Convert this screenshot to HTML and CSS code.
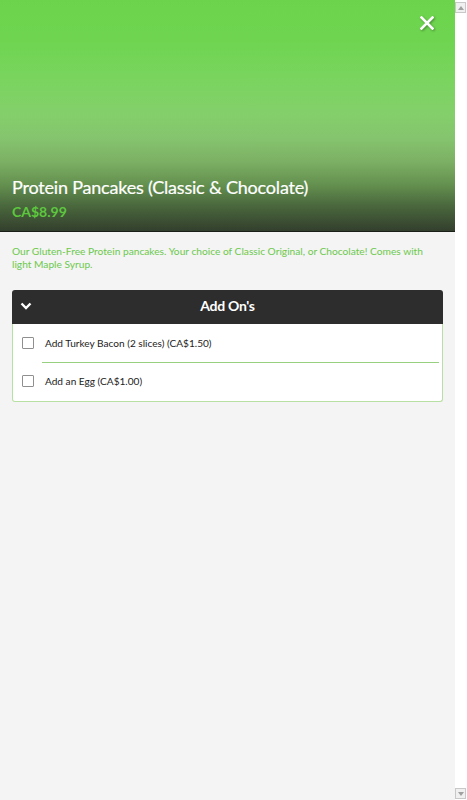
FILE: index.html
```html
<!DOCTYPE html>
<html>
<head>
<meta charset="utf-8">
<link rel="stylesheet" href="styles.css">
</head>
<body>
<div class="frame">
  <main class="page">
    <header class="hero">
      <button class="close" aria-label="Close">
        <svg width="14" height="14" viewBox="0 0 14 14"><path d="M1.5 1.5 L12.5 12.5 M12.5 1.5 L1.5 12.5" stroke="#fff" stroke-width="2.6" stroke-linecap="square"/></svg>
      </button>
      <div class="hero-text">
        <h1 class="title">Protein Pancakes (Classic &amp; Chocolate)</h1>
        <div class="price">CA$8.99</div>
      </div>
    </header>
    <p class="desc">Our Gluten-Free Protein pancakes. Your choice of Classic Original, or Chocolate! Comes with light Maple Syrup.</p>
    <section class="panel">
      <div class="panel-head">
        <svg class="chev" width="12" height="8" viewBox="0 0 12 8"><path d="M1.5 1.5 L6 6 L10.5 1.5" stroke="#fff" stroke-width="2.4" fill="none"/></svg>
        <span class="panel-title">Add On's</span>
      </div>
      <div class="panel-body">
        <label class="row row-first"><span class="box"></span><span class="label">Add Turkey Bacon (2 slices) (CA$1.50)</span></label>
        <div class="sep"></div>
        <label class="row row-last"><span class="box"></span><span class="label">Add an Egg (CA$1.00)</span></label>
      </div>
    </section>
  </main>
  <aside class="scrollbar">
    <div class="sb-btn"><svg width="6" height="4" viewBox="0 0 6 4"><path d="M0 4 L3 0 L6 4Z" fill="#a0a0a0"/></svg></div>
    <div class="sb-track"></div>
    <div class="sb-btn"><svg width="6" height="4" viewBox="0 0 6 4"><path d="M0 0 L3 4 L6 0Z" fill="#a0a0a0"/></svg></div>
  </aside>
</div>
</body>
</html>
```
FILE: styles.css
```css
html, body {
  margin: 0;
  padding: 0;
}
body {
  font-family: Lato, "Open Sans", sans-serif;
  background: #fff;
  overflow: hidden;
}
.frame {
  display: grid;
  grid-template-columns: 455px 12px;
  height: 800px;
}
.page {
  background: #f4f4f4;
  height: 800px;
}
.hero {
  height: 231px;
  border-bottom: 1px solid #1a1f17;
  background: linear-gradient(180deg, #6cd44c 0%, #6fd551 18%, #7ad45f 35%, #84cf6b 50%, #85c46e 60%, #7cb064 70%, #64904f 80%, #4a683d 89%, #333f2d 100%);
  display: flex;
  flex-direction: column;
  justify-content: flex-end;
  position: relative;
}
.close {
  position: absolute;
  top: 16px;
  right: 21px;
  background: none;
  border: 0;
  padding: 0;
  width: 14px;
  height: 14px;
  filter: drop-shadow(1px 1px 1px rgba(0,0,0,0.35));
}
.close svg { display: block; }
.hero-text {
  padding: 0 12px 10px;
}
.title {
  margin: 0;
  color: #fff;
  font-size: 18px;
  font-weight: 400;
  line-height: 22px;
  letter-spacing: -0.2px;
  -webkit-text-stroke: 0.2px #fff;
}
.price {
  color: #5dc83e;
  font-weight: 700;
  font-size: 14px;
  line-height: 18px;
  margin-top: 5px;
}
.desc {
  margin: 13px 12px 0;
  color: #6cc94c;
  font-size: 10.2px;
  line-height: 13px;
}
.panel {
  margin: 19px 12px 0;
  width: 431px;
}
.panel-head {
  height: 34px;
  background: #2d2d2d;
  border-radius: 3px 3px 0 0;
  display: flex;
  align-items: center;
  position: relative;
}
.chev {
  margin-left: 8px;
  margin-top: -2px;
  display: block;
}
.panel-title {
  position: absolute;
  left: 0;
  right: 0;
  top: 7px;
  line-height: 17px;
  text-align: center;
  color: #fff;
  font-weight: 700;
  font-size: 14px;
  letter-spacing: -0.3px;
}
.panel-body {
  background: #fff;
  border: 1px solid #b8e0a4;
  border-top: 0;
  border-radius: 0 0 3px 3px;
  padding: 0 3px 0 9px;
}
.row {
  display: flex;
  align-items: center;
  gap: 11px;
  font-size: 10.1px;
  color: #222;
  box-sizing: border-box;
  height: 38px;
}
.row-last { padding-bottom: 2px; }
.box {
  width: 10px;
  height: 10px;
  border: 1px solid #8f8f8f;
  border-radius: 1px;
  background: #fff;
  flex: none;
}
.sep {
  height: 1px;
  background: #97d07f;
  margin-left: 20px;
}
.scrollbar {
  background: #fff;
  display: flex;
  flex-direction: column;
  padding: 2px 1px 1px 0;
}
.sb-btn {
  height: 11px;
  background: #f0f0f0;
  border: 1px solid #c8c8c8;
  box-sizing: border-box;
  display: flex;
  align-items: center;
  justify-content: center;
}
.sb-track { flex: 1; }
```
